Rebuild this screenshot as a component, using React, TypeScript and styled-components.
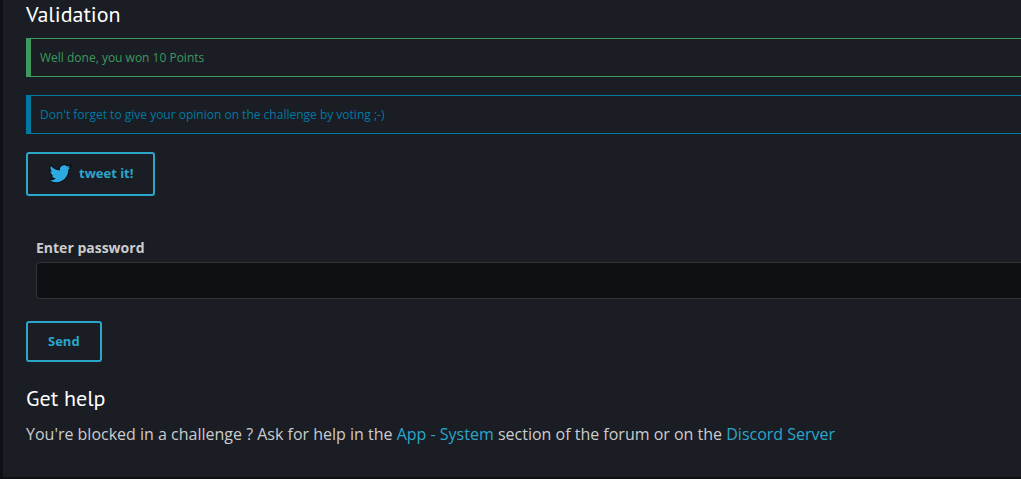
import React from "react";
import styled, { createGlobalStyle } from "styled-components";

const GlobalStyle = createGlobalStyle`
  *, *::before, *::after { box-sizing: border-box; }
  body {
    margin: 0;
    background: #0f1013;
    color: #cccccc;
    font-family: "Open Sans", "Noto Sans", sans-serif;
    font-size: 16px;
    line-height: 24px;
    overflow-x: hidden;
  }
`;

const Panel = styled.main`
  margin: 0 0 2px 3px;
  padding: 0 0 31px 23px;
  background: #1a1d24;
`;

const Heading = styled.h2`
  margin: 0;
  color: #ffffff;
  font-family: "PT Sans", "Noto Sans", sans-serif;
  font-size: 22px;
  font-weight: 400;
  line-height: 28px;
`;

const Notices = styled.div`
  display: flex;
  flex-direction: column;
  gap: 18px;
  margin: 10px 0 18px;
`;

const Notice = styled.div<{ $color: string }>`
  padding: 10px 9px 9px;
  border: 1px solid ${(p) => p.$color};
  border-left-width: 5px;
  border-right: 0;
  color: ${(p) => p.$color};
  font-size: 12px;
  line-height: 18px;
`;

const Button = styled.button<{ $tall?: boolean }>`
  display: flex;
  align-items: center;
  gap: 8px;
  height: ${(p) => (p.$tall ? 44 : 41)}px;
  padding: 0 20px 2px;
  border: 2px solid #2ba6cb;
  border-radius: 3px;
  background: transparent;
  color: #2ba6cb;
  font-family: inherit;
  font-size: 13px;
  font-weight: 700;
  line-height: 18px;
  cursor: pointer;
`;

const Bird = styled.svg`
  width: 23px;
  height: 20px;
  overflow: visible;
`;

const Form = styled.form`
  margin: 40px 0 22px;
`;

const Field = styled.div`
  display: flex;
  flex-direction: column;
  gap: 2px;
  margin: 0 0 22px 10px;
`;

const Label = styled.label`
  font-size: 14px;
  font-weight: 700;
  line-height: 24px;
`;

const Input = styled.input`
  width: 100%;
  height: 37px;
  padding: 8px;
  border: 1px solid #333333;
  border-right: 0;
  border-radius: 4px 0 0 4px;
  background: #0f1013;
  color: #cccccc;
  font: inherit;
`;

const Text = styled.p`
  margin: 10px 0 0;
`;

const Link = styled.a`
  color: #2ba6cb;
  text-decoration: none;
`;

export default function App() {
  return (
    <>
      <GlobalStyle />
      <Panel>
        <Heading>Validation</Heading>
        <Notices>
          <Notice $color="#3c9a5f">Well done, you won 10 Points</Notice>
          <Notice $color="#007aa3">
            Don't forget to give your opinion on the challenge by voting ;-)
          </Notice>
        </Notices>
        <Button type="button" $tall>
          <Bird viewBox="-38 -4 562 489" aria-hidden="true">
            <path
              fill="#2caae1"
              stroke="#080b10"
              strokeWidth="44"
              paintOrder="stroke"
              d="M459.37 151.716c.325 4.548.325 9.097.325 13.645 0 138.72-105.583 298.558-298.558 298.558-59.452 0-114.68-17.219-161.137-47.106 8.447.974 16.568 1.299 25.34 1.299 49.055 0 94.213-16.568 130.274-44.832-46.132-.975-84.792-31.188-98.112-72.772 6.498.974 12.995 1.624 19.818 1.624 9.421 0 18.843-1.3 27.614-3.573-48.081-9.747-84.143-51.98-84.143-102.985v-1.299c13.969 7.797 30.214 12.67 47.431 13.319-28.264-18.843-46.781-51.005-46.781-87.391 0-19.492 5.197-37.36 14.294-52.954 51.655 63.675 129.3 105.258 216.365 109.807-1.624-7.797-2.599-15.918-2.599-24.04 0-57.828 46.782-104.934 104.934-104.934 30.213 0 57.502 12.67 76.67 33.137 23.715-4.548 46.456-13.32 66.599-25.34-7.798 24.366-24.366 44.833-46.132 57.827 21.117-2.273 41.584-8.122 60.426-16.243-14.292 20.791-32.161 39.308-52.628 54.253z"
            />
          </Bird>
          tweet it!
        </Button>
        <Form onSubmit={(e: React.FormEvent) => e.preventDefault()}>
          <Field>
            <Label htmlFor="password">Enter password</Label>
            <Input id="password" name="password" type="text" />
          </Field>
          <Button type="submit">Send</Button>
        </Form>
        <Heading>Get help</Heading>
        <Text>
          You're blocked in a challenge ? Ask for help in the{" "}
          <Link href="#forum">App - System</Link> section of the forum or on the{" "}
          <Link href="#discord">Discord Server</Link>
        </Text>
      </Panel>
    </>
  );
}
